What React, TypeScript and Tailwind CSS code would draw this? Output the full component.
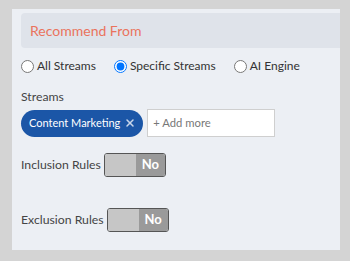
import { X } from "lucide-react";

const Toggle = () => (
  <div className="flex h-[24px] w-[62px] overflow-hidden rounded-[3px] border border-[#555]">
    <div className="w-[31px] bg-[#c6c6c6]" />
    <div className="flex flex-1 items-center justify-center bg-[#9a9a9a] text-[13px] font-bold text-white">
      No
    </div>
  </div>
);

const Radio = ({ label, checked }: { label: string; checked?: boolean }) => (
  <label className="flex items-center gap-[3px]">
    <input
      type="radio"
      name="source"
      defaultChecked={checked}
      className="m-0 h-[13px] w-[13px]"
    />
    <span>{label}</span>
  </label>
);

export default function App() {
  return (
    <div
      className="h-[261px] w-[350px] bg-[#d4d4d4] pl-[12px] pr-[10px] pt-[9px] text-[#444]"
      style={{ fontFamily: 'Lato, "Noto Sans", sans-serif' }}
    >
      <div className="h-[241px] bg-[#eceff4] pl-[9px] pt-[4px]">
        {/* header */}
        <div className="flex h-[35px] items-center rounded-l-[4px] bg-[#dfe3ea] pl-[9px] text-[14px] text-[#ea735d]">
          Recommend From
        </div>

        <div className="mt-[9px] flex h-[18px] items-center gap-[18px] text-[12px] text-[#333]">
          <Radio label="All Streams" />
          <Radio label="Specific Streams" checked />
          <Radio label="AI Engine" />
        </div>

        <div className="mt-[13px] h-[18px] text-[12.25px] leading-[18px]">Streams</div>
        <div className="mt-[3px] flex h-[28px] items-center gap-[4px]">
          <div className="flex h-[27px] items-center gap-[4px] rounded-full bg-[#1b56a7] pl-[8px] pr-[7px] text-[11px] text-white">
            Content Marketing
            <X size={12} strokeWidth={3} className="text-[#c9d6ea]" />
          </div>
          <div className="flex h-[28px] w-[128px] items-center border border-[#cfcfcf] bg-white pl-[5px] text-[11.25px] text-[#777]">
            + Add more
          </div>
        </div>

        <div className="mt-[16px] flex items-center gap-[3px] text-[12.25px]">
          <span>Inclusion Rules</span>
          <Toggle />
        </div>
        <div className="mt-[31px] flex items-center gap-[3px] text-[12.25px]">
          <span>Exclusion Rules</span>
          <Toggle />
        </div>
      </div>
    </div>
  );
}
